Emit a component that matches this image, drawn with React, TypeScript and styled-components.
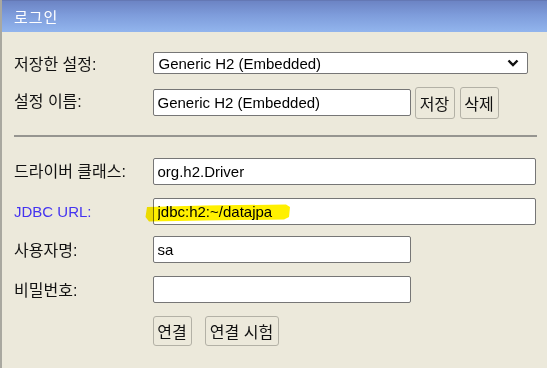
import styled, { createGlobalStyle } from "styled-components";

const GlobalStyle = createGlobalStyle`
  html, body {
    margin: 0;
    padding: 0;
    background: #ece9db;
  }
  * {
    box-sizing: border-box;
  }
`;

const FONT = `"Liberation Sans", Arial, "Noto Sans CJK KR", sans-serif`;

const App = () => {
  return (
    <>
      <GlobalStyle />
      <LoginWrapper>
        <LoginHeader>로그인</LoginHeader>
        <LoginForm>
          <FormRow height={22}>
            <FormLabel>저장한 설정:</FormLabel>
            <SelectWrapper>
              <SettingSelect defaultValue="h2e">
                <option value="h2e">Generic H2 (Embedded)</option>
              </SettingSelect>
              <Chevron width="12" height="8" viewBox="0 0 12 8">
                <path d="M1.5 1.5 L6 6 L10.5 1.5" fill="none" stroke="#111" strokeWidth="2.4" />
              </Chevron>
            </SelectWrapper>
          </FormRow>

          <FormRow height={33} top={12}>
            <FormLabel lift={5}>설정 이름:</FormLabel>
            <TextInput width={258} defaultValue="Generic H2 (Embedded)" />
            <SmallButtons>
              <FormButton width={40} height={32}>저장</FormButton>
              <FormButton width={39} height={32}>삭제</FormButton>
            </SmallButtons>
          </FormRow>

          <Separator />

          <FormRow height={27}>
            <FormLabel lift={4}>드라이버 클래스:</FormLabel>
            <TextInput width={383} defaultValue="org.h2.Driver" />
          </FormRow>

          <FormRow height={27} top={13}>
            <FormLabel color="#4433f0" size={15}>JDBC URL:</FormLabel>
            <HighlightWrapper>
              <TextInput width={383} defaultValue="jdbc:h2:~/datajpa" />
              <Highlight width="146" height="18" viewBox="0 0 146 18">
                <path
                  d="M2 3 L60 1.5 L141 0.5 L145 3 L144 13 L139 15.5 L60 16.5 L4 17.5 L0.5 13 Z"
                  fill="#fff000"
                />
              </Highlight>
            </HighlightWrapper>
          </FormRow>

          <FormRow height={27} top={11}>
            <FormLabel lift={2}>사용자명:</FormLabel>
            <TextInput width={258} defaultValue="sa" />
          </FormRow>

          <FormRow height={27} top={13}>
            <FormLabel lift={2}>비밀번호:</FormLabel>
            <TextInput width={258} type="password" defaultValue="" />
          </FormRow>

          <FormRow height={30} top={13}>
            <FormLabel />
            <ConnectButtons>
              <FormButton width={39} height={30}>연결</FormButton>
              <FormButton width={74} height={30}>연결 시험</FormButton>
            </ConnectButtons>
          </FormRow>
        </LoginForm>
      </LoginWrapper>
    </>
  );
};

const LoginWrapper = styled.div`
  height: 100vh;
  border-left: 2px solid #a9a8a0;
  background: #ece9db;
  font-family: ${FONT};
`;

const LoginHeader = styled.div`
  height: 32px;
  padding-left: 12px;
  display: flex;
  align-items: center;
  color: #fff;
  font-size: 15px;
  letter-spacing: 1px;
  background: linear-gradient(to bottom, #6c84c4 0%, #7e9cdb 45%, #92b5ed 100%);
  border-top: 1px solid #6478b4;
`;

const LoginForm = styled.div`
  padding: 20px 0 0 12px;
  display: flex;
  flex-direction: column;
`;

const FormRow = styled.div<{ height: number; top?: number }>`
  height: ${(p) => p.height}px;
  margin-top: ${(p) => p.top ?? 0}px;
  display: flex;
  align-items: center;
`;

const FormLabel = styled.div<{ color?: string; lift?: number; size?: number }>`
  width: 138.5px;
  flex-shrink: 0;
  font-size: ${(p) => p.size ?? 16}px;
  color: ${(p) => p.color ?? "#111"};
  margin-top: ${(p) => -(p.lift ?? 0)}px;
`;

const SelectWrapper = styled.div`
  position: relative;
  width: 375px;
  height: 22px;
`;

const SettingSelect = styled.select`
  appearance: none;
  width: 100%;
  height: 100%;
  border: 1px solid #767676;
  border-radius: 2px;
  background: #fff;
  font-family: ${FONT};
  font-size: 15px;
  color: #000;
  padding: 0 0 0 5px;
  outline: none;
`;

const Chevron = styled.svg`
  position: absolute;
  right: 9px;
  top: 7px;
  pointer-events: none;
`;

const TextInput = styled.input<{ width: number }>`
  width: ${(p) => p.width}px;
  height: 27px;
  border: 1px solid #767676;
  border-radius: 2px;
  background: #fff;
  font-family: ${FONT};
  font-size: 15px;
  color: #000;
  padding: 0 4px;
  outline: none;
`;

const HighlightWrapper = styled.div`
  position: relative;
  display: flex;
`;

const Highlight = styled.svg`
  position: absolute;
  left: -8px;
  top: 6px;
  mix-blend-mode: multiply;
  pointer-events: none;
`;

const SmallButtons = styled.div`
  display: flex;
  gap: 5px;
  margin-left: 4px;
`;

const ConnectButtons = styled.div`
  display: flex;
  gap: 13px;
`;

const FormButton = styled.button<{ width: number; height: number }>`
  width: ${(p) => p.width}px;
  height: ${(p) => p.height}px;
  padding: 0;
  border: 1px solid #b3b1a6;
  border-radius: 3px;
  background: #ece9db;
  font-family: ${FONT};
  font-size: 16px;
  color: #111;
`;

const Separator = styled.hr`
  margin: 16px 10px 0 0;
  height: 0;
  border: none;
  border-top: 2px solid #969590;
  margin-bottom: 21px;
`;

export default App;
